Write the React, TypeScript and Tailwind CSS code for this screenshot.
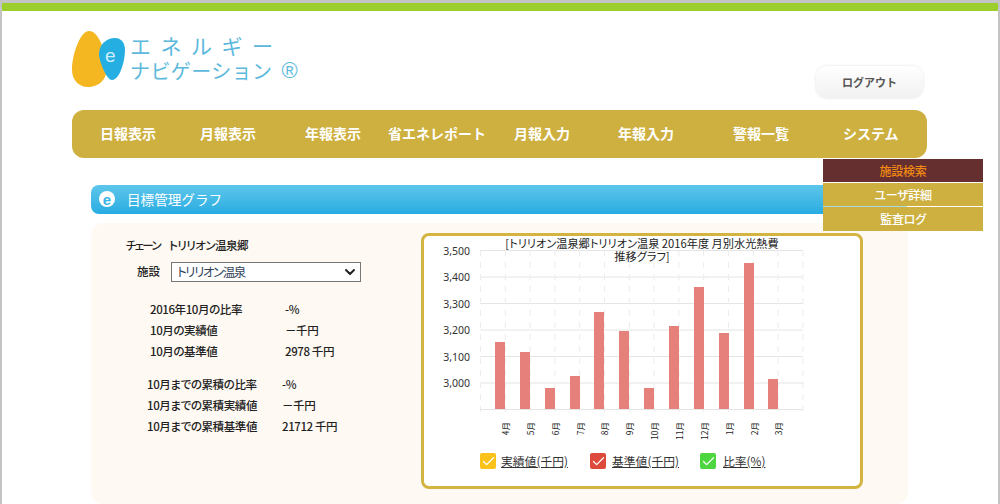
import { Check, ChevronDown } from "lucide-react";

const cjk = { fontFamily: '"Noto Sans CJK JP", "Noto Sans", sans-serif' };

const nav = [
  { label: "日報表示", cls: "ml-[28px]" },
  { label: "月報表示", cls: "ml-[44px]" },
  { label: "年報表示", cls: "ml-[49px]" },
  { label: "省エネレポート", cls: "ml-[27px]" },
  { label: "月報入力", cls: "ml-[28px]" },
  { label: "年報入力", cls: "ml-[48px]" },
  { label: "警報一覧", cls: "ml-[59px]" },
  { label: "システム", cls: "ml-[54px]" },
];

const bars = [
  [495, 342], [520, 352], [545, 388], [570, 376], [594, 312], [619, 331],
  [644, 388], [669, 326], [694, 287], [719, 333], [744, 263], [768, 379],
];
const months = ["4月", "5月", "6月", "7月", "8月", "9月", "10月", "11月", "12月", "1月", "2月", "3月"];
const grid = [250.5, 277, 303.5, 330, 356.5, 383, 409.5];
const yLabels = ["3,500", "3,400", "3,300", "3,200", "3,100", "3,000"];

function Row({ a, b, cls }: { a: string; b: string; cls: string }) {
  return (
    <div className={`flex h-[21px] items-center text-[11.5px] font-medium tracking-[-0.4px] text-[#222] [font-feature-settings:'palt'] ${cls}`}>
      <span className="w-[135px] whitespace-nowrap">{a}</span>
      <span className="whitespace-nowrap">{b}</span>
    </div>
  );
}

function Legend({ color, label, cls, labelCls }: { color: string; label: string; cls: string; labelCls: string }) {
  return (
    <div className={`flex items-center ${cls}`}>
      <span className={`flex h-4 w-4 items-center justify-center rounded-[2px] ${color}`}>
        <Check size={15} strokeWidth={2} className="text-white" />
      </span>
      <span className={`text-[11.8px] leading-4 text-[#333] underline whitespace-nowrap ${labelCls}`}>{label}</span>
    </div>
  );
}

export default function App() {
  return (
    <div
      style={cjk}
      className="relative flex h-[504px] w-full flex-col overflow-hidden border-x-2 border-t-[3px] border-[#c4c4c4] bg-white"
    >
      <div className="h-2 shrink-0 bg-[#9ccf2e]" />

      <header className="flex h-[99px] shrink-0 items-start justify-between pl-[70px] pr-[75px]">
        <div className="flex pt-[19px]">
          <svg width="54" height="58" viewBox="72 30 54 58" className="shrink-0">
            <path d="M89 31C97 31 103 44 106 60C110 78 100 87 88 87C78 87 72 79 72 70C72 55 80 31 89 31Z" fill="#f4b722" />
            <path d="M115 38C122 38 125 44 125 50C125 60 120 80 112 80C106 80 99 60 99 54C99 44 107 38 115 38Z" fill="#25aee2" />
            <text x="105" y="62" fontSize="19" fill="#cfeefa" fontFamily="Liberation Sans">e</text>
          </svg>
          <div className="ml-[4px] text-[#5db9dc]">
            <div className="mt-[3px] h-[25px] whitespace-nowrap text-[21px] font-normal leading-[25px] tracking-[9.5px]">エネルギー</div>
            <div className="flex h-[25px] items-center whitespace-nowrap text-[20px] font-normal leading-[25px] tracking-[0.4px]">
              ナビゲーション
              <span className="ml-[9px] text-[22px] leading-none" style={{ fontFamily: '"Liberation Sans", sans-serif' }}>®</span>
            </div>
          </div>
        </div>
        <button className="mt-[55px] flex h-[32px] w-[107px] items-center justify-center rounded-[11px] bg-gradient-to-b from-white to-[#f1f1f1] text-[11px] font-bold text-[#555] shadow-[0_0_3px_rgba(0,0,0,0.12)]">
          ログアウト
        </button>
      </header>

      <nav className="ml-[70px] flex h-[48px] w-[855px] shrink-0 items-center rounded-[12px] bg-[#cdb03f] pb-[2px]">
        {nav.map((n) => (
          <span key={n.label} className={`whitespace-nowrap text-[14px] font-bold text-white ${n.cls}`}>
            {n.label}
          </span>
        ))}
      </nav>

      <div className="ml-[89px] mt-[27px] flex h-[29px] w-[732px] shrink-0 items-center rounded-l-[8px] bg-gradient-to-b from-[#5cc6ea] to-[#25ace2] pb-[1px] pl-[8px]">
        <span
          className="flex h-4 w-4 items-center justify-center rounded-full bg-white text-[15px] font-bold leading-none text-[#3bb5e5]"
          style={{ fontFamily: '"Liberation Sans", sans-serif' }}
        >
          e
        </span>
        <span className="ml-[12px] text-[13.6px] text-white">目標管理グラフ</span>
      </div>

      <main className="ml-[89px] mt-[9px] flex w-[817px] flex-1 rounded-[12px] bg-[#fef9f2] pt-[10px]">
        <section className="w-[330px] shrink-0">
          <div className="flex h-[25px] items-center pl-[35px] text-[11.5px] font-medium text-[#222] [font-feature-settings:'palt']">
            <span className="w-[43px] whitespace-nowrap tracking-[-1.8px]">チェーン</span>
            <span className="whitespace-nowrap tracking-[-0.5px]">トリリオン温泉郷</span>
          </div>
          <div className="mt-[4px] flex h-[20px] items-center pl-[46px]">
            <span className="w-[34px] text-[11.5px] font-medium text-[#222]">施設</span>
            <div className="flex h-[20px] w-[190px] items-center justify-between border border-[#777] bg-white pl-[5px] pr-[2px] text-[12.5px] tracking-[-1.4px] text-[#33455c] [font-feature-settings:'palt']">
              <span>トリリオン温泉</span>
              <ChevronDown size={16} strokeWidth={3} className="text-[#222]" />
            </div>
          </div>
          <div className="mt-[17px]">
            <Row cls="pl-[59px]" a="2016年10月の比率" b="-%" />
            <Row cls="pl-[59px]" a="10月の実績値" b="－千円" />
            <Row cls="pl-[59px]" a="10月の基準値" b="2978 千円" />
          </div>
          <div className="mt-[12px]">
            <Row cls="pl-[56px]" a="10月までの累積の比率" b="-%" />
            <Row cls="pl-[56px]" a="10月までの累積実績値" b="－千円" />
            <Row cls="pl-[56px]" a="10月までの累積基準値" b="21712 千円" />
          </div>
        </section>

        <section className="h-[256px] w-[442px] shrink-0 rounded-[8px] border-[3px] border-[#d4b440] bg-white">
          <svg width="436" height="212" viewBox="424 236 436 212" className="block">
            {grid.map((y) => (
              <line key={y} x1="480" x2="803" y1={y} y2={y} stroke="#e4e4e4" strokeWidth="1" />
            ))}
            {Array.from({ length: 14 }, (_, i) => 480.5 + i * 24.8).map((x) => (
              <line key={x} x1={x} x2={x} y1="250" y2="414" stroke="#ececec" strokeWidth="1" strokeDasharray="6 6" />
            ))}
            {bars.map(([x, top]) => (
              <rect key={x} x={x} y={top} width="10" height={409 - top} fill="#e5817a" />
            ))}
            {yLabels.map((l, i) => (
              <text key={l} x="470" y={grid[i] + 4} textAnchor="end" fontSize="10.5" fill="#333" fontFamily="Noto Sans">
                {l}
              </text>
            ))}
            {months.map((m, i) => {
              const x = bars[i][0] + 14;
              return (
                <text key={m} transform={`translate(${x} 422) rotate(-90)`} textAnchor="end" fontSize="8.5" fill="#222">
                  {m}
                </text>
              );
            })}
            <text x="642" y="248" textAnchor="middle" fontSize="11.2" fill="#222" style={{ fontFeatureSettings: '"palt"' }}>
              [トリリオン温泉郷トリリオン温泉 2016年度 月別水光熱費
            </text>
            <text x="642" y="261" textAnchor="middle" fontSize="11.2" fill="#222" style={{ fontFeatureSettings: '"palt"' }}>
              推移グラフ]
            </text>
          </svg>
          <div className="ml-[56px] mt-[5px] flex">
            <Legend color="bg-[#fcc21c]" label="実績値(千円)" cls="w-[110px]" labelCls="ml-[5px]" />
            <Legend color="bg-[#dd4a3c]" label="基準値(千円)" cls="w-[110px]" labelCls="ml-[6px]" />
            <Legend color="bg-[#4dd63f]" label="比率(%)" cls="" labelCls="ml-[7px]" />
          </div>
        </section>
      </main>

      <div className="absolute left-[821px] top-[156px] w-[160px] text-center text-[12px] font-medium tracking-[-0.3px] [font-feature-settings:'palt']">
        <div className="flex h-[24px] items-center justify-center border-b border-white bg-[#662f2f] text-[#f08a12]">施設検索</div>
        <div className="relative flex h-[24px] items-center justify-center border-b border-white bg-[#cdb03f] text-white">
          ユーザ詳細
          <span className="absolute -bottom-px left-0 h-px w-[84px] bg-[#a9dbe2]" />
        </div>
        <div className="flex h-[24px] items-center justify-center bg-[#cdb03f] text-white">監査ログ</div>
      </div>
    </div>
  );
}
